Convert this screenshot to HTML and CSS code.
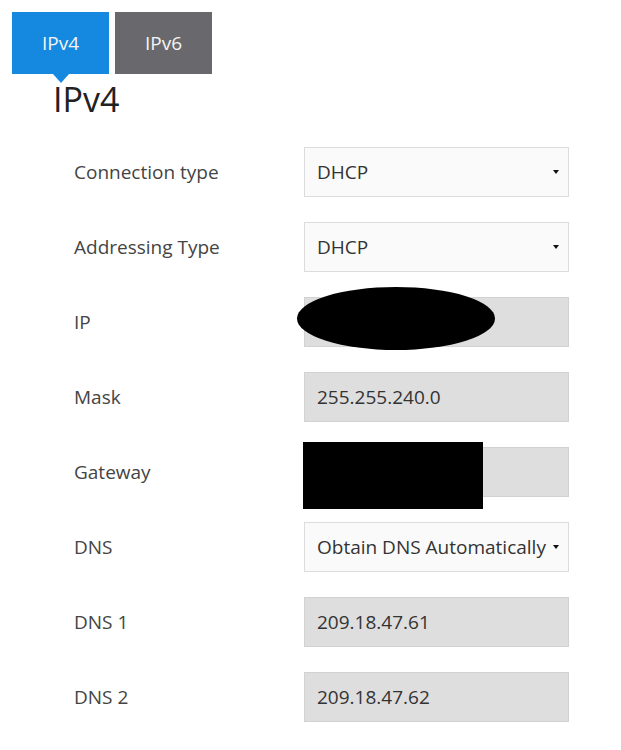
FILE: index.html
```html
<!DOCTYPE html>
<html lang="en">
<head>
  <meta charset="UTF-8" />
  <meta name="viewport" content="width=device-width, initial-scale=1.0" />
  <title>Network – IPv4</title>
  <link rel="stylesheet" href="styles.css">
</head>
<body>
  <div class="tabs">
    <div class="tab active">IPv4</div>
    <div class="tab">IPv6</div>
  </div>

  <h2 class="section-title">IPv4</h2>

  <form class="settings">
    <label class="label">Connection type</label>
    <div class="select-wrap">
      <select class="field select">
        <option>DHCP</option>
      </select>
    </div>

    <label class="label">Addressing Type</label>
    <div class="select-wrap">
      <select class="field select">
        <option>DHCP</option>
      </select>
    </div>

    <label class="label">IP</label>
    <div class="field-wrap">
      <input class="field readonly" type="text" value="" readonly>
      <span class="redact ellipse"></span>
    </div>

    <label class="label">Mask</label>
    <input class="field readonly" type="text" value="255.255.240.0" readonly>

    <label class="label">Gateway</label>
    <div class="field-wrap">
      <input class="field readonly" type="text" value="" readonly>
      <span class="redact box"></span>
    </div>

    <label class="label">DNS</label>
    <div class="select-wrap">
      <select class="field select">
        <option>Obtain DNS Automatically</option>
      </select>
    </div>

    <label class="label">DNS 1</label>
    <input class="field readonly" type="text" value="209.18.47.61" readonly>

    <label class="label">DNS 2</label>
    <input class="field readonly" type="text" value="209.18.47.62" readonly>
  </form>
</body>
</html>
```

FILE: styles.css
```css
body {
  font-family: "Open Sans", "Noto Sans", Arial, sans-serif;
  background: #ffffff;
  color: #444;
  margin: 0;
  padding: 12px 0 0 0;
}

.tabs {
  display: flex;
  gap: 6px;
  padding-left: 12px;
}

.tab {
  position: relative;
  width: 97px;
  height: 62px;
  display: flex;
  align-items: center;
  justify-content: center;
  font-size: 19px;
  color: #f4f4f4;
  background: #69686d;
}

.tab.active {
  background: #1589e0;
}

.tab.active::after {
  content: "";
  position: absolute;
  left: 50%;
  top: 100%;
  margin-left: -8px;
  border-left: 8px solid transparent;
  border-right: 8px solid transparent;
  border-top: 9px solid #1589e0;
}

.section-title {
  margin: 3px 0 0 53px;
  font-size: 34px;
  font-weight: 400;
  line-height: 44px;
  color: #222;
}

.settings {
  display: grid;
  grid-template-columns: 230px 265px;
  grid-auto-rows: 50px;
  row-gap: 25px;
  padding-left: 74px;
  margin-top: 26px;
}

.label {
  display: flex;
  align-items: center;
  font-size: 19px;
  color: #444;
}

.field {
  box-sizing: border-box;
  width: 265px;
  height: 50px;
  margin: 0;
  padding: 0 12px;
  font-family: inherit;
  font-size: 19px;
  color: #333;
  border: 1px solid #d6d6d6;
  border-radius: 0;
  outline: none;
}

.select {
  appearance: none;
  -webkit-appearance: none;
  background: #fafafa;
  border-color: #dcdcdc;
}

.readonly {
  background: #dedede;
  border-color: #d2d2d2;
}

.select-wrap,
.field-wrap {
  position: relative;
}

.select-wrap::after {
  content: "";
  position: absolute;
  right: 10px;
  top: 23px;
  border-left: 3px solid transparent;
  border-right: 3px solid transparent;
  border-top: 4px solid #111;
}

.redact {
  position: absolute;
  background: #000;
}

.redact.ellipse {
  left: -7px;
  top: -10px;
  width: 198px;
  height: 63px;
  border-radius: 50%;
}

.redact.box {
  left: -1px;
  top: -5px;
  width: 180px;
  height: 67px;
}
```
